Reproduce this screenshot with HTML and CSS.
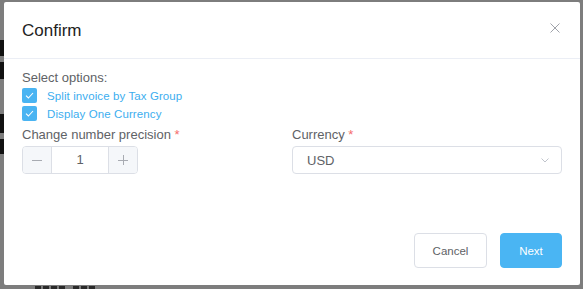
FILE: index.html
```html
<!DOCTYPE html>
<html lang="en">
<head>
  <meta charset="UTF-8" />
  <meta name="viewport" content="width=device-width, initial-scale=1.0" />
  <title>Confirm</title>
  <link rel="stylesheet" href="styles.css">
</head>
<body>
  <!-- page content behind the mask -->
  <div class="behind">
    <span class="sliver s1"></span>
    <span class="sliver s2"></span>
    <span class="sliver s3"></span>
    <span class="sliver s4"></span>
    <div class="peek">
      <span></span><span></span><span></span><span></span><span class="gap"></span><span></span><span></span><span></span>
    </div>
  </div>

  <div class="modal">
    <div class="modal-header">
      <span class="modal-title">Confirm</span>
      <button class="close" aria-label="Close">
        <svg width="10" height="10" viewBox="0 0 10 10"><path d="M0.5 0.5L9.5 9.5M9.5 0.5L0.5 9.5" stroke="#a0a3aa" stroke-width="1" fill="none"/></svg>
      </button>
    </div>

    <div class="modal-body">
      <div class="label">Select options:</div>
      <label class="check">
        <span class="box"><svg width="15" height="15" viewBox="0 0 15 15"><path d="M4 7.6L6.4 10L11 5" stroke="#fff" stroke-width="1.1" fill="none"/></svg></span>
        Split invoice by Tax Group
      </label>
      <label class="check">
        <span class="box"><svg width="15" height="15" viewBox="0 0 15 15"><path d="M4 7.6L6.4 10L11 5" stroke="#fff" stroke-width="1.1" fill="none"/></svg></span>
        Display One Currency
      </label>

      <div class="fields">
        <div class="field">
          <div class="label">Change number precision <span class="req">*</span></div>
          <div class="number">
            <span class="step minus"><svg width="10" height="10" viewBox="0 0 10 10"><path d="M0 5.5H10" stroke="#a8abb2" stroke-width="1"/></svg></span>
            <span class="value">1</span>
            <span class="step plus"><svg width="10" height="10" viewBox="0 0 10 10"><path d="M0 5.5H10M5.5 0V10" stroke="#a8abb2" stroke-width="1"/></svg></span>
          </div>
        </div>
        <div class="field">
          <div class="label">Currency <span class="req">*</span></div>
          <div class="select">
            <span>USD</span>
            <svg width="8" height="5" viewBox="0 0 8 5"><path d="M0.5 0.5L4 4L7.5 0.5" stroke="#c0c4cc" stroke-width="1" fill="none"/></svg>
          </div>
        </div>
      </div>
    </div>

    <div class="modal-footer">
      <button class="btn">Cancel</button>
      <button class="btn primary">Next</button>
    </div>
  </div>
</body>
</html>
```

FILE: styles.css
```css
html, body {
  margin: 0;
  height: 289px;
  overflow: hidden;
}
body {
  font-family: "Liberation Sans", Arial, sans-serif;
  background: #7d7d7d;
  padding: 2px 0 0 4px;
  box-sizing: border-box;
  position: relative;
}
.behind {
  position: absolute;
  inset: 0;
}
.sliver {
  position: absolute;
  left: 0;
  width: 4px;
  background: #111;
}
.s1 { top: 40px; height: 16px; }
.s2 { top: 62px; height: 17px; }
.s3 { top: 114px; height: 19px; }
.s4 { top: 139px; height: 15px; }
.peek {
  position: absolute;
  left: 35px;
  top: 286px;
  display: flex;
  gap: 2px;
}
.peek span {
  width: 6px;
  height: 3px;
  background: #2a2a2a;
}
.peek .gap {
  width: 4px;
  background: none;
}
.modal {
  position: relative;
  width: 576px;
  height: 283px;
  background: #fff;
  border-radius: 2px;
  display: flex;
  flex-direction: column;
  box-sizing: border-box;
}
.modal-header {
  display: flex;
  justify-content: space-between;
  align-items: flex-start;
  padding: 18px 18px;
  height: 57px;
  box-sizing: border-box;
  border-bottom: 1px solid #ebeef5;
}
.modal-title {
  font-size: 17px;
  line-height: 21px;
  color: #222;
}
.close {
  border: 0;
  background: none;
  padding: 0;
  margin: 3px 2px 0 0;
  width: 10px;
  height: 10px;
  display: flex;
}
.modal-body {
  padding: 11px 18px 0;
}
.label {
  font-size: 13px;
  line-height: 16px;
  color: #606266;
}
.req {
  color: #f56c6c;
}
.check {
  display: flex;
  align-items: center;
  gap: 10px;
  height: 15px;
  margin-top: 3px;
  font-size: 11.5px;
  letter-spacing: 0.1px;
  color: #3caeef;
}
.check:first-of-type {
  margin-top: 2px;
}
.box {
  width: 15px;
  height: 15px;
  border-radius: 2px;
  background: #4ab4f2;
  display: flex;
}
.fields {
  display: grid;
  grid-template-columns: 270px 270px;
  margin-top: 6px;
}
.field .label {
  margin-bottom: 3px;
}
.number {
  width: 116px;
  height: 28px;
  box-sizing: border-box;
  border: 1px solid #dcdfe6;
  border-radius: 4px;
  display: flex;
  overflow: hidden;
}
.step {
  width: 28px;
  background: #f5f7fa;
  display: flex;
  align-items: center;
  justify-content: center;
}
.minus { border-right: 1px solid #dcdfe6; }
.plus { border-left: 1px solid #dcdfe6; }
.value {
  flex: 1;
  text-align: center;
  font-size: 13px;
  line-height: 26px;
  color: #606266;
}
.select {
  width: 270px;
  height: 28px;
  box-sizing: border-box;
  border: 1px solid #dcdfe6;
  border-radius: 4px;
  display: flex;
  align-items: center;
  justify-content: space-between;
  padding: 0 12px 0 14px;
  font-size: 13px;
  color: #606266;
}
.modal-footer {
  margin-top: auto;
  display: flex;
  justify-content: flex-end;
  gap: 13px;
  padding: 0 18px 17px;
}
.btn {
  height: 35px;
  border: 1px solid #dcdfe6;
  border-radius: 4px;
  background: #fff;
  color: #606266;
  font-family: inherit;
  font-size: 11.5px;
  width: 73px;
}
.btn.primary {
  width: 62px;
  background: #4ab5f3;
  border-color: #4ab5f3;
  color: #fff;
}
```
